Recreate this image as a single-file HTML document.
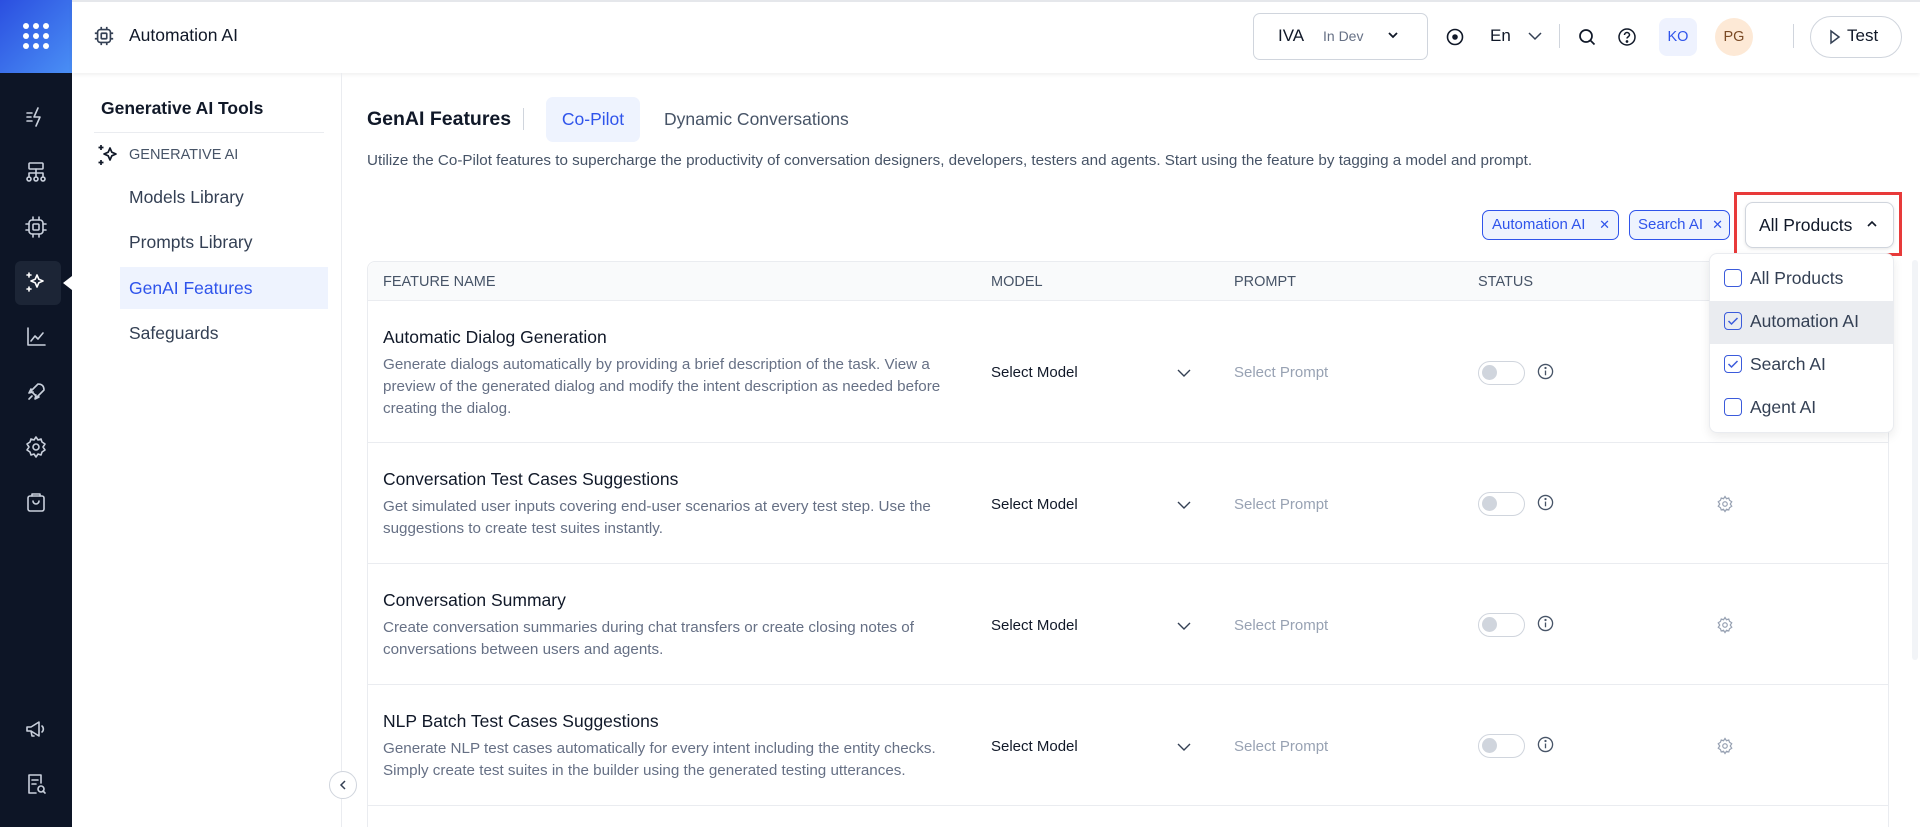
<!DOCTYPE html>
<html><head><meta charset="utf-8"><style>
*{box-sizing:border-box;margin:0;padding:0}
html,body{width:1920px;height:827px;overflow:hidden}
body{background:#fff;font-family:"Liberation Sans",sans-serif;color:#101828;position:relative}
.a{position:absolute}
.rail{left:0;top:0;width:72px;height:827px;background:#0d1526}
.logo{left:0;top:0;width:72px;height:73px;background:linear-gradient(135deg,#2b4fe0,#4a8ff5)}
.ri{left:24px;width:26px;height:26px}
.ri svg{width:24px;height:24px;stroke:#c9d0dc;fill:none;stroke-width:1.6;stroke-linecap:round;stroke-linejoin:round}
.hdr{left:72px;top:0;width:1848px;height:73px;background:#fff;box-shadow:0 2px 4px rgba(0,0,0,.06);border-top:2px solid #e5e7eb}
.side{left:72px;top:73px;width:270px;height:754px;border-right:1px solid #eaecf0}
.t15{font-size:17.5px;color:#344054}
.row{left:367px;width:1522px;border-bottom:1px solid #eaecf0}
.ttl{font-size:17.5px;color:#101828}
.dsc{font-size:15.2px;color:#667085;line-height:22px;width:590px}
.sm{font-size:15px;color:#101828}
.sp{font-size:15px;color:#98a2b3}
.tog{width:47px;height:24px;border:1.5px solid #d0d5dd;border-radius:12px}
.tog:after{content:"";position:absolute;left:3px;top:3px;width:15px;height:15px;border-radius:50%;background:#d0d5dd}
.th{font-size:14.5px;color:#475467;top:274px}
.cb{width:18px;height:18px;border:1.6px solid #3b5bdb;border-radius:4px}
</style></head><body>
<div class="a rail"></div>
<div class="a logo">
<svg class="a" style="left:22px;top:22px" width="28" height="28" viewBox="0 0 28 28" fill="#fff"><circle cx="4" cy="4" r="3"/><circle cx="14" cy="4" r="3"/><circle cx="24" cy="4" r="3"/><circle cx="4" cy="14" r="3"/><circle cx="14" cy="14" r="3"/><circle cx="24" cy="14" r="3"/><circle cx="4" cy="24" r="3"/><circle cx="14" cy="24" r="3"/><circle cx="24" cy="24" r="3"/></svg>
</div>
<div class="a ri" style="top:105px"><svg viewBox="0 0 24 24"><path d="M3 8h5M3 12h4M3 16h5M14 3l-4 9h6l-4 9"/></svg></div>
<div class="a ri" style="top:160px"><svg viewBox="0 0 24 24"><rect x="5" y="3" width="14" height="6" rx="1"/><path d="M12 9v4M5 13h14M5 13v4M12 13v4M19 13v4"/><circle cx="5" cy="19" r="2"/><circle cx="12" cy="19" r="2"/><circle cx="19" cy="19" r="2"/></svg></div>
<div class="a ri" style="top:215px"><svg viewBox="0 0 24 24"><rect x="5" y="5" width="14" height="14" rx="3"/><rect x="9" y="9" width="6" height="6" rx="1"/><path d="M9 2v3M15 2v3M9 19v3M15 19v3M2 9h3M2 15h3M19 9h3M19 15h3"/></svg></div>
<div class="a" style="left:15px;top:261px;width:46px;height:44px;background:#1c2536;border-radius:6px"></div>
<div class="a ri" style="top:270px"><svg viewBox="0 0 24 24" style="stroke:#fff"><path d="M13 5l1.8 4.2L19 11l-4.2 1.8L13 17l-1.8-4.2L7 11l4.2-1.8z"/><path d="M5 3v4M3 5h4M5 17v4M3 19h4"/></svg></div>
<div class="a" style="left:63px;top:276px;width:0;height:0;border-top:7px solid transparent;border-bottom:7px solid transparent;border-right:9px solid #fff"></div>
<div class="a ri" style="top:325px"><svg viewBox="0 0 24 24"><path d="M4 3v17h17M7 16l4-5 3 3 5-6"/></svg></div>
<div class="a ri" style="top:380px"><svg viewBox="0 0 24 24"><path d="M5 19l3-3M14 4c4 0 6 2 6 6l-7 7-6-6z M9 12l-4 1 2-4M12 15l-1 4 4-2"/></svg></div>
<div class="a ri" style="top:435px"><svg viewBox="0 0 24 24"><circle cx="12" cy="12" r="3"/><path d="M12 2l2 3 3-1 1 3 3 2-2 3 2 3-3 2-1 3-3-1-2 3-2-3-3 1-1-3-3-2 2-3-2-3 3-2 1-3 3 1z"/></svg></div>
<div class="a ri" style="top:490px"><svg viewBox="0 0 24 24"><rect x="4" y="6" width="16" height="15" rx="2"/><path d="M8 6V4h8v2M9 11a3 3 0 006 0"/></svg></div>
<div class="a ri" style="top:717px"><svg viewBox="0 0 24 24"><path d="M3 10v4h4l8 5V5L7 10zM7 14l1 5h2M18 9a4 4 0 010 6"/></svg></div>
<div class="a ri" style="top:772px"><svg viewBox="0 0 24 24"><path d="M17 11V3H5v18h7M8 8h6M8 12h4"/><circle cx="17" cy="17" r="3"/><path d="M19 19l2 2"/></svg></div>

<div class="a hdr"></div>
<svg class="a" style="left:93px;top:25px" width="22" height="22" viewBox="0 0 24 24" fill="none" stroke="#344054" stroke-width="1.8"><rect x="5" y="5" width="14" height="14" rx="3"/><rect x="9" y="9" width="6" height="6" rx="1"/><path d="M9 2v3M15 2v3M9 19v3M15 19v3M2 9h3M2 15h3M19 9h3M19 15h3"/></svg>
<div class="a" style="left:129px;top:25px;font-size:17.5px;color:#101828">Automation AI</div>
<div class="a" style="left:1253px;top:13px;width:175px;height:47px;border:1px solid #d0d5dd;border-radius:7px"></div>
<div class="a" style="left:1278px;top:26px;font-size:17px">IVA</div>
<div class="a" style="left:1323px;top:28px;font-size:14px;color:#667085">In Dev</div>
<svg class="a" style="left:1386px;top:28px" width="14" height="14" viewBox="0 0 14 14" fill="none" stroke="#101828" stroke-width="1.8"><path d="M3 5l4 4 4-4"/></svg>
<svg class="a" style="left:1445px;top:27px" width="20" height="20" viewBox="0 0 20 20" fill="none" stroke="#101828" stroke-width="1.6"><circle cx="10" cy="10" r="7.5"/><circle cx="10" cy="10" r="2" fill="#101828"/></svg>
<div class="a" style="left:1490px;top:26px;font-size:17px">En</div>
<svg class="a" style="left:1527px;top:29px" width="16" height="14" viewBox="0 0 16 14" fill="none" stroke="#344054" stroke-width="1.5"><path d="M2 4l6 6 6-6"/></svg>
<div class="a" style="left:1559px;top:24px;width:1px;height:24px;background:#d0d5dd"></div>
<svg class="a" style="left:1577px;top:27px" width="20" height="20" viewBox="0 0 20 20" fill="none" stroke="#101828" stroke-width="1.7"><circle cx="9" cy="9" r="6"/><path d="M13.5 13.5l4 4"/></svg>
<svg class="a" style="left:1617px;top:27px" width="20" height="20" viewBox="0 0 20 20" fill="none" stroke="#101828" stroke-width="1.5"><circle cx="10" cy="10" r="8"/><path d="M7.5 8a2.5 2.5 0 115 0c0 1.5-2.5 2-2.5 3.5"/><circle cx="10" cy="14.5" r=".6" fill="#101828"/></svg>
<div class="a" style="left:1659px;top:18px;width:38px;height:38px;border-radius:8px;background:#eef2fe;color:#2f54eb;font-size:14.5px;text-align:center;line-height:38px">KO</div>
<div class="a" style="left:1715px;top:18px;width:38px;height:38px;border-radius:50%;background:#fde9d6;color:#7a4a25;font-size:14.5px;text-align:center;line-height:38px">PG</div>
<div class="a" style="left:1793px;top:24px;width:1px;height:24px;background:#d0d5dd"></div>
<div class="a" style="left:1810px;top:16px;width:92px;height:42px;border:1px solid #d0d5dd;border-radius:21px"></div>
<svg class="a" style="left:1829px;top:29px" width="12" height="16" viewBox="0 0 12 16" fill="none" stroke="#344054" stroke-width="1.5"><path d="M2 2l8 6-8 6z"/></svg>
<div class="a" style="left:1847px;top:26px;font-size:17px">Test</div>

<div class="a side"></div>
<div class="a" style="left:101px;top:98px;font-size:17.5px;color:#101828;font-weight:bold">Generative AI Tools</div>
<div class="a" style="left:94px;top:132px;width:230px;height:1px;background:#eaecf0"></div>
<svg class="a" style="left:96px;top:143px" width="24" height="24" viewBox="0 0 24 24" fill="none" stroke="#101828" stroke-width="1.7" stroke-linejoin="round"><path d="M14 5l1.8 4.2L20 11l-4.2 1.8L14 17l-1.8-4.2L8 11l4.2-1.8z"/><path d="M5 2v5M2.5 4.5h5M5 17v5M2.5 19.5h5"/></svg>
<div class="a" style="left:129px;top:147px;font-size:14.5px;color:#475467">GENERATIVE AI</div>
<div class="a t15" style="left:129px;top:187px">Models Library</div>
<div class="a t15" style="left:129px;top:232px">Prompts Library</div>
<div class="a" style="left:120px;top:267px;width:208px;height:42px;background:#eef3fe"></div>
<div class="a t15" style="left:129px;top:278px;color:#2f54eb">GenAI Features</div>
<div class="a t15" style="left:129px;top:323px">Safeguards</div>
<div class="a" style="left:329px;top:771px;width:28px;height:28px;border-radius:50%;border:1px solid #d0d5dd;background:#fff"></div>
<svg class="a" style="left:337px;top:779px" width="12" height="12" viewBox="0 0 12 12" fill="none" stroke="#344054" stroke-width="1.5"><path d="M8 2L4 6l4 4"/></svg>

<div class="a" style="left:367px;top:108px;font-size:19.5px;font-weight:bold">GenAI Features</div>
<div class="a" style="left:523px;top:108px;width:1px;height:22px;background:#d0d5dd"></div>
<div class="a" style="left:546px;top:97px;width:94px;height:45px;border-radius:7px;background:#eef3fe;color:#2f54eb;font-size:17.5px;text-align:center;line-height:45px">Co-Pilot</div>
<div class="a" style="left:664px;top:109px;font-size:17.5px;color:#475467">Dynamic Conversations</div>
<div class="a" style="left:367px;top:152px;font-size:15.2px;color:#475467;white-space:nowrap">Utilize the Co-Pilot features to supercharge the productivity of conversation designers, developers, testers and agents. Start using the feature by tagging a model and prompt.</div>

<div class="a" style="left:1482px;top:210px;width:137px;height:30px;border:1px solid #2f54eb;border-radius:7px;background:#eef3fe;color:#2f54eb;font-size:15px;line-height:28px;padding-left:9px">Automation AI<span style="position:absolute;right:8px;font-size:13px">✕</span></div>
<div class="a" style="left:1629px;top:210px;width:101px;height:30px;border:1px solid #2f54eb;border-radius:7px;background:#eef3fe;color:#2f54eb;font-size:15px;line-height:28px;padding-left:8px">Search AI<span style="position:absolute;right:6px;font-size:13px">✕</span></div>
<div class="a" style="left:1745px;top:202px;width:149px;height:46px;border:1px solid #d0d5dd;border-radius:8px;background:#fff;box-shadow:0 1px 3px rgba(0,0,0,.1)"></div>
<div class="a" style="left:1759px;top:215px;font-size:17.5px">All Products</div>
<svg class="a" style="left:1866px;top:218px" width="12" height="12" viewBox="0 0 12 12" fill="none" stroke="#101828" stroke-width="1.6"><path d="M2 8l4-4 4 4"/></svg>
<div class="a" style="left:1734px;top:192px;width:168px;height:64px;border:3px solid #e83a3a"></div>

<div class="a" style="left:367px;top:261px;width:1522px;height:566px;border:1px solid #eaecf0;border-bottom:none;border-radius:8px 8px 0 0"></div>
<div class="a" style="left:368px;top:262px;width:1520px;height:39px;background:#f9fafb;border-bottom:1px solid #eaecf0;border-radius:8px 8px 0 0"></div>
<div class="a th" style="left:383px">FEATURE NAME</div>
<div class="a th" style="left:991px">MODEL</div>
<div class="a th" style="left:1234px">PROMPT</div>
<div class="a th" style="left:1478px">STATUS</div>

<div class="a row" style="top:301px;height:142px"></div>
<div class="a ttl" style="left:383px;top:327px">Automatic Dialog Generation</div>
<div class="a dsc" style="left:383px;top:354px">Generate dialogs automatically by providing a brief description of the task. View a preview of the generated dialog and modify the intent description as needed before creating the dialog.</div>
<div class="a row" style="top:443px;height:121px"></div>
<div class="a ttl" style="left:383px;top:469px">Conversation Test Cases Suggestions</div>
<div class="a dsc" style="left:383px;top:496px">Get simulated user inputs covering end-user scenarios at every test step. Use the suggestions to create test suites instantly.</div>
<div class="a row" style="top:564px;height:121px"></div>
<div class="a ttl" style="left:383px;top:590px">Conversation Summary</div>
<div class="a dsc" style="left:383px;top:617px">Create conversation summaries during chat transfers or create closing notes of conversations between users and agents.</div>
<div class="a row" style="top:685px;height:121px"></div>
<div class="a ttl" style="left:383px;top:711px">NLP Batch Test Cases Suggestions</div>
<div class="a dsc" style="left:383px;top:738px">Generate NLP test cases automatically for every intent including the entity checks. Simply create test suites in the builder using the generated testing utterances.</div>

<div class="a sm" style="left:991px;top:364px">Select Model</div><div class="a sp" style="left:1234px;top:364px">Select Prompt</div>
<div class="a sm" style="left:991px;top:496px">Select Model</div><div class="a sp" style="left:1234px;top:496px">Select Prompt</div>
<div class="a sm" style="left:991px;top:617px">Select Model</div><div class="a sp" style="left:1234px;top:617px">Select Prompt</div>
<div class="a sm" style="left:991px;top:738px">Select Model</div><div class="a sp" style="left:1234px;top:738px">Select Prompt</div>
<svg class="a" style="left:1176px;top:367px" width="16" height="12" viewBox="0 0 16 12" fill="none" stroke="#344054" stroke-width="1.4"><path d="M2 3l6 6 6-6"/></svg>
<svg class="a" style="left:1176px;top:499px" width="16" height="12" viewBox="0 0 16 12" fill="none" stroke="#344054" stroke-width="1.4"><path d="M2 3l6 6 6-6"/></svg>
<svg class="a" style="left:1176px;top:620px" width="16" height="12" viewBox="0 0 16 12" fill="none" stroke="#344054" stroke-width="1.4"><path d="M2 3l6 6 6-6"/></svg>
<svg class="a" style="left:1176px;top:741px" width="16" height="12" viewBox="0 0 16 12" fill="none" stroke="#344054" stroke-width="1.4"><path d="M2 3l6 6 6-6"/></svg>
<div class="a tog" style="left:1478px;top:361px"></div>
<div class="a tog" style="left:1478px;top:492px"></div>
<div class="a tog" style="left:1478px;top:613px"></div>
<div class="a tog" style="left:1478px;top:734px"></div>
<svg class="a" style="left:1537px;top:363px" width="17" height="17" viewBox="0 0 18 18" fill="none" stroke="#475467" stroke-width="1.4"><circle cx="9" cy="9" r="7.5"/><path d="M9 8v5"/><circle cx="9" cy="5.3" r=".5" fill="#475467"/></svg>
<svg class="a" style="left:1537px;top:494px" width="17" height="17" viewBox="0 0 18 18" fill="none" stroke="#475467" stroke-width="1.4"><circle cx="9" cy="9" r="7.5"/><path d="M9 8v5"/><circle cx="9" cy="5.3" r=".5" fill="#475467"/></svg>
<svg class="a" style="left:1537px;top:615px" width="17" height="17" viewBox="0 0 18 18" fill="none" stroke="#475467" stroke-width="1.4"><circle cx="9" cy="9" r="7.5"/><path d="M9 8v5"/><circle cx="9" cy="5.3" r=".5" fill="#475467"/></svg>
<svg class="a" style="left:1537px;top:736px" width="17" height="17" viewBox="0 0 18 18" fill="none" stroke="#475467" stroke-width="1.4"><circle cx="9" cy="9" r="7.5"/><path d="M9 8v5"/><circle cx="9" cy="5.3" r=".5" fill="#475467"/></svg>
<svg class="a" style="left:1716px;top:495px" width="18" height="18" viewBox="0 0 24 24" fill="none" stroke="#98a2b3" stroke-width="1.6"><circle cx="12" cy="12" r="3"/><path d="M12 2l2 3 3-1 1 3 3 2-2 3 2 3-3 2-1 3-3-1-2 3-2-3-3 1-1-3-3-2 2-3-2-3 3-2 1-3 3 1z"/></svg>
<svg class="a" style="left:1716px;top:616px" width="18" height="18" viewBox="0 0 24 24" fill="none" stroke="#98a2b3" stroke-width="1.6"><circle cx="12" cy="12" r="3"/><path d="M12 2l2 3 3-1 1 3 3 2-2 3 2 3-3 2-1 3-3-1-2 3-2-3-3 1-1-3-3-2 2-3-2-3 3-2 1-3 3 1z"/></svg>
<svg class="a" style="left:1716px;top:737px" width="18" height="18" viewBox="0 0 24 24" fill="none" stroke="#98a2b3" stroke-width="1.6"><circle cx="12" cy="12" r="3"/><path d="M12 2l2 3 3-1 1 3 3 2-2 3 2 3-3 2-1 3-3-1-2 3-2-3-3 1-1-3-3-2 2-3-2-3 3-2 1-3 3 1z"/></svg>

<div class="a" style="left:1912px;top:260px;width:6px;height:400px;background:#f2f4f7;border-radius:3px"></div>

<div class="a" style="left:1709px;top:253px;width:185px;height:180px;background:#fff;border:1px solid #eaecf0;border-radius:8px;box-shadow:0 4px 10px rgba(0,0,0,.08)"></div>
<div class="a" style="left:1710px;top:301px;width:183px;height:43px;background:#eaecf0"></div>
<div class="a cb" style="left:1724px;top:269px"></div><div class="a" style="left:1750px;top:268px;font-size:17.5px;color:#344054">All Products</div>
<div class="a cb" style="left:1724px;top:312px"></div><svg class="a" style="left:1727px;top:316px" width="12" height="10" viewBox="0 0 12 10" fill="none" stroke="#3b5bdb" stroke-width="1.5"><path d="M1.5 5l3 3 6-6"/></svg><div class="a" style="left:1750px;top:311px;font-size:17.5px;color:#344054">Automation AI</div>
<div class="a cb" style="left:1724px;top:355px"></div><svg class="a" style="left:1727px;top:359px" width="12" height="10" viewBox="0 0 12 10" fill="none" stroke="#3b5bdb" stroke-width="1.5"><path d="M1.5 5l3 3 6-6"/></svg><div class="a" style="left:1750px;top:354px;font-size:17.5px;color:#344054">Search AI</div>
<div class="a cb" style="left:1724px;top:398px"></div><div class="a" style="left:1750px;top:397px;font-size:17.5px;color:#344054">Agent AI</div>
</body></html>
